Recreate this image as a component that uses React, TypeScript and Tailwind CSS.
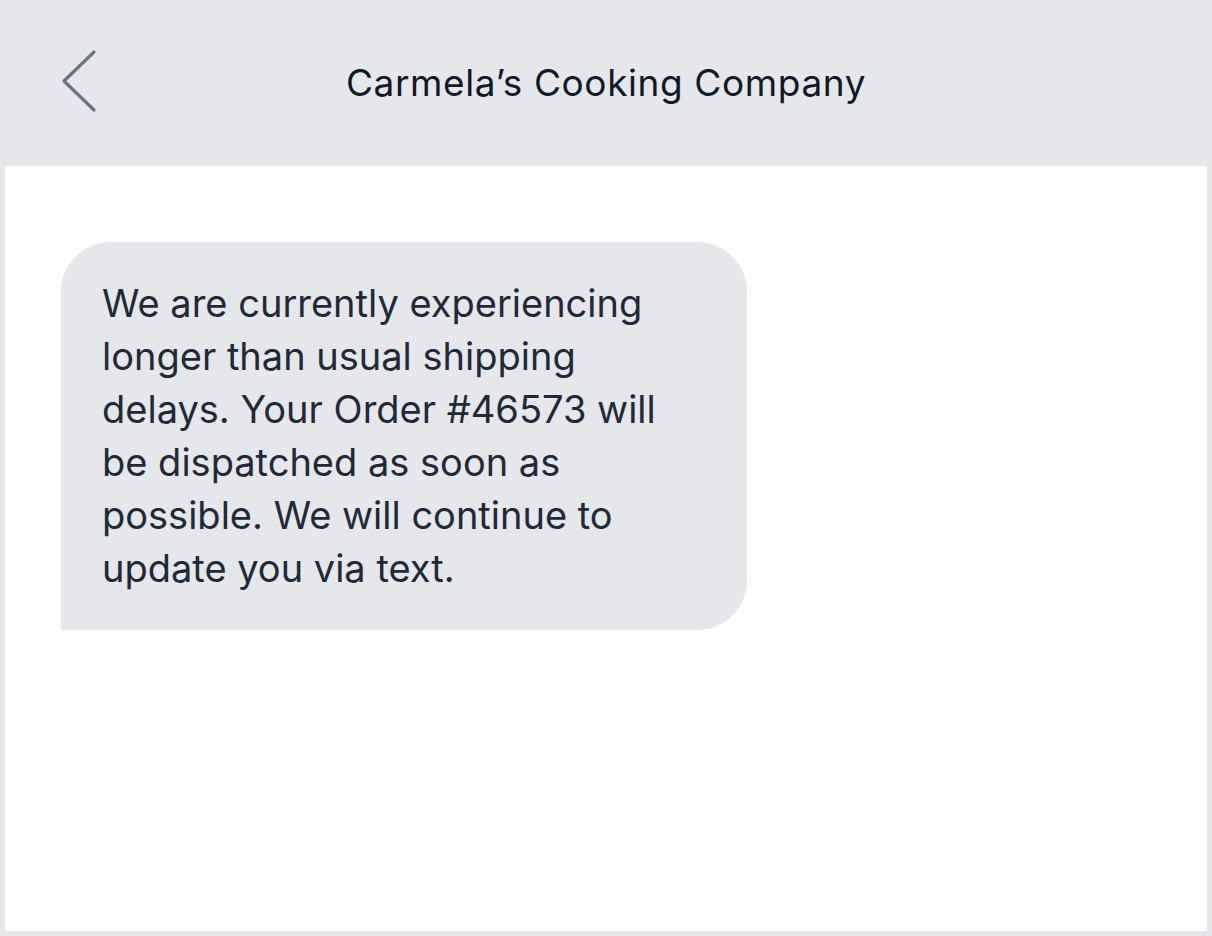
export default function App() {
  return (
    <div className="w-[1212px] h-[936px] bg-[#e5e7eb] flex flex-col" style={{ fontFamily: "Inter, 'Liberation Sans', sans-serif" }}>
      {/* Header */}
      <header className="h-[166px] shrink-0 relative flex items-center justify-center">
        <button className="absolute left-[60px] top-[49px] text-[#6b7280]">
          <svg width="38" height="64" viewBox="0 0 38 64" fill="none">
            <path d="M34 3 L4 32 L34 61" stroke="currentColor" strokeWidth="3.2" strokeLinecap="round" strokeLinejoin="round" />
          </svg>
        </button>
        <h1 className="text-[37px] text-[#111827] tracking-[0.6px]">Carmela’s Cooking Company</h1>
      </header>

      {/* Conversation */}
      <main className="flex-1 mx-[5px] mb-[5px] bg-white pt-[76px] pl-[56px]">
        <div className="w-[686px] bg-[#e5e7eb] rounded-[50px] rounded-bl-none px-[41px] pt-[35px] pb-[35px] text-[38px] leading-[53px] text-[#1f2937]">
          We are currently experiencing
          <br />
          longer than usual shipping
          <br />
          delays. Your Order #46573 will
          <br />
          be dispatched as soon as
          <br />
          possible. We will continue to
          <br />
          update you via text.
        </div>
      </main>
    </div>
  );
}
